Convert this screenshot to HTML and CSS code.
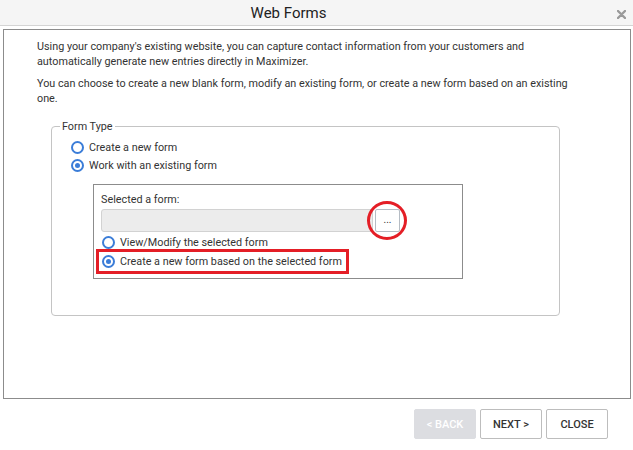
FILE: index.html
```html
<!DOCTYPE html>
<html>
<head>
  <title>Web Forms</title>
<link rel="stylesheet" href="styles.css">
</head>
<body>
<div class="dialog">
  <div class="title-bar">
    <div class="title">Web Forms</div>
    <div class="close">
      <svg width="9" height="9" viewBox="0 0 9 9"><path d="M1 1 L8 8 M8 1 L1 8" stroke="#9a9a9a" stroke-width="2.4" stroke-linecap="round"/></svg>
    </div>
  </div>

  <div class="content">
    <p>Using your company's existing website, you can capture contact information from your customers and automatically generate new entries directly in Maximizer.</p>
    <p>You can choose to create a new blank form, modify an existing form, or create a new form based on an existing one.</p>

    <fieldset class="form-type">
      <legend>Form Type</legend>
      <div class="options">
        <label class="option"><span class="radio"></span>Create a new form</label>
        <label class="option"><span class="radio checked"></span>Work with an existing form</label>
      </div>

      <div class="existing">
        <div class="field-label">Selected a form:</div>
        <div class="pick">
          <div class="pick-input"></div>
          <div class="pick-wrap">
            <button class="pick-btn">...</button>
            <span class="ring"></span>
          </div>
        </div>
        <label class="option sub"><span class="radio"></span>View/Modify the selected form</label>
        <label class="option sub marked"><span class="radio checked"></span>Create a new form based on the selected form</label>
      </div>
    </fieldset>
  </div>

  <div class="actions">
    <button class="btn" disabled>&lt; BACK</button>
    <button class="btn">NEXT &gt;</button>
    <button class="btn">CLOSE</button>
  </div>
</div>
</body>
</html>
```

FILE: styles.css
```css
* {
  box-sizing: border-box;
  margin: 0;
  padding: 0;
}

body {
  font-family: Roboto, 'Liberation Sans', sans-serif;
  font-size: 10.8px;
  color: #333;
  background: #fff;
  width: 633px;
  height: 450px;
  overflow: hidden;
}

.title-bar {
  height: 26px;
  background: #f5f5f5;
  border-bottom: 1px solid #d4d4d4;
  display: flex;
  align-items: center;
}

.title {
  flex: 1;
  text-align: center;
  font-size: 15px;
  color: #222;
}

.close {
  width: 56px;
  display: flex;
  justify-content: flex-end;
  padding-right: 7px;
  padding-top: 3px;
}

.content {
  margin: 3px 2px 0 3px;
  height: 370px;
  border: 1px solid #8c8c8c;
  padding: 9px 0 0 33px;
}

.content p {
  width: 536px;
  line-height: 15px;
  margin-bottom: 7px;
}

.form-type {
  margin: 13px 0 0 14px;
  width: 509px;
  border: 1px solid #c4c4c4;
  border-radius: 4px;
  padding: 4px 0 36px 8px;
}

.form-type legend {
  padding: 0 2px;
  line-height: 15px;
}

.options {
  margin-left: 11px;
}

.option {
  display: flex;
  align-items: center;
  height: 18px;
  white-space: nowrap;
}

.radio {
  width: 13px;
  height: 13px;
  border: 2px solid #3b7dd8;
  border-radius: 50%;
  margin-right: 5px;
  position: relative;
  flex-shrink: 0;
}

.radio.checked::after {
  content: "";
  position: absolute;
  top: 2px;
  left: 2px;
  width: 5px;
  height: 5px;
  border-radius: 50%;
  background: #3b7dd8;
}

.existing {
  margin: 10px 0 0 33px;
  width: 370px;
  border: 1px solid #8c8c8c;
  padding: 7px 7px 4px 7px;
}

.field-label {
  line-height: 16px;
  margin-bottom: 1px;
}

.pick {
  display: flex;
  gap: 2px;
}

.pick-input {
  width: 272px;
  height: 23px;
  background: #ececec;
  border: 1px solid #d2d2d2;
  border-radius: 3px;
}

.pick-wrap {
  position: relative;
}

.pick-btn {
  width: 25px;
  height: 23px;
  background: #fff;
  border: 1px solid #b5bcc4;
  border-radius: 2px;
  font-family: Roboto, sans-serif;
  font-size: 10px;
  color: #333;
  padding-bottom: 2px;
}

.ring {
  position: absolute;
  left: -8px;
  top: -8px;
  width: 40px;
  height: 39px;
  border: 3px solid #e41e26;
  border-radius: 50%;
}

.option.sub {
  height: 16px;
  margin-top: 2px;
  margin-left: 1px;
}

.option.sub.marked {
  height: 25px;
  width: 253px;
  margin: -1px 0 0 -5px;
  border: 3px solid #e41e26;
  padding-left: 3px;
}

.actions {
  display: flex;
  justify-content: flex-end;
  gap: 4px;
  margin-top: 10px;
  padding-right: 25px;
}

.btn {
  width: 62px;
  height: 30px;
  background: #fff;
  border: 1px solid #bdbdbd;
  border-radius: 2px;
  font-family: Roboto, sans-serif;
  font-size: 11px;
  font-weight: 500;
  color: #333;
}

.btn:disabled {
  background: #dcdde1;
  border-color: #dcdde1;
  color: #fff;
}
```
